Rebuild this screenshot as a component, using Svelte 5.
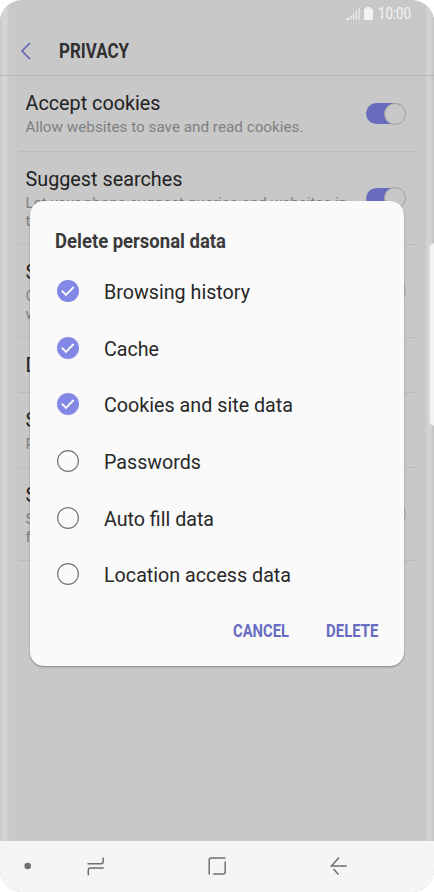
<script lang="ts">
  interface Setting {
    title: string
    lines: string[]
    height: number
    toggle?: 'on' | 'off'
  }

  const settings: Setting[] = [
    { title: 'Accept cookies', lines: ['Allow websites to save and read cookies.'], height: 76, toggle: 'on' },
    { title: 'Suggest searches', lines: ['Let your phone suggest queries and websites in', 'the'], height: 93, toggle: 'on' },
    { title: 'Save', lines: ['Offer', 'when'], height: 93, toggle: 'off' },
    { title: 'Delete', lines: [], height: 55 },
    { title: 'Secret', lines: ['Pass'], height: 75 },
    { title: 'Send', lines: ['Share', 'for'], height: 93, toggle: 'off' }
  ]

  let options = $state([
    { label: 'Browsing history', width: 146, checked: true },
    { label: 'Cache', width: 55, checked: true },
    { label: 'Cookies and site data', width: 189, checked: true },
    { label: 'Passwords', width: 97, checked: false },
    { label: 'Auto fill data', width: 110, checked: false },
    { label: 'Location access data', width: 187, checked: false }
  ])
</script>

{#snippet fitted(text: string, width: number, size: number, weight: number, baseline = 20)}
  <svg class="fitted" width={width} height="24" aria-label={text}>
    <text x="0" y={baseline} font-size={size} font-weight={weight} textLength={width} lengthAdjust="spacingAndGlyphs">{text}</text>
  </svg>
{/snippet}

<div class="phone">
  <div class="edge left"></div>
  <div class="edge right"></div>

  <div class="status">
    <svg width="14" height="13" viewBox="0 0 14 13">
      <path d="M.9 12.500 2.500 11.300v1.200zM5 12.500V9M7.700 12.500V6M10.300 12.500V3.500M13 12.500V1" />
    </svg>
    <svg class="battery" width="9" height="13" viewBox="0 0 9 13">
      <path d="M2.500 0h4v1.500H8q1 0 1 1V12q0 1-1 1H1q-1 0-1-1V2.500q0-1 1-1h1.500z" />
    </svg>
    {@render fitted('10:00', 33, 16.6, 400, 18)}
  </div>

  <header>
    <svg width="12" height="18" viewBox="0 0 12 18">
      <path d="M10 1 2 9l8 8" />
    </svg>
    {@render fitted('PRIVACY', 70, 19.8, 700, 19.4)}
  </header>

  <main>
    {#each settings as item}
      <section style="height: {item.height}px">
        <div class="copy">
          <h2>{item.title}</h2>
          {#each item.lines as line}
            <p>{line}</p>
          {/each}
        </div>
        {#if item.toggle}
          <span class="toggle {item.toggle}"></span>
        {/if}
      </section>
    {/each}
  </main>

  <nav>
    <svg width="434" height="51" viewBox="0 0 434 51">
      <circle cx="27.700" cy="25" r="3.300" />
      <path d="M87.500 22.800h13.500q2.200 0 2.200-2.200v-4.200M103.800 27h-13.300q-2.200 0-2.200 2.200v5" />
      <path d="M225.500 17h-14.300q-2 0-2 2v14.500M225.200 20.500v10.500q0 2-2 2h-10" />
      <path d="M346.800 25h-15.300l7.500-8.500M333.500 28l5 5.500" />
    </svg>
  </nav>

  <div class="handle"></div>

  <div class="dialog">
    <h1>{@render fitted('Delete personal data', 171, 20, 700)}</h1>
    <ul>
      {#each options as option}
        <li>
          <button onclick={() => (option.checked = !option.checked)}>
            <svg width="22" height="22" viewBox="0 0 22 22">
              {#if option.checked}
                <circle class="filled" cx="11" cy="11" r="11" />
                <path class="tick" d="m4.800 10.700 4.200 4.300 7.700-8" />
              {:else}
                <circle class="empty" cx="11" cy="11" r="10.400" />
              {/if}
            </svg>
            {@render fitted(option.label, option.width, 19.8, 400, 19.8)}
          </button>
        </li>
      {/each}
    </ul>
    <div class="actions">
      <button>{@render fitted('CANCEL', 56, 17.5, 700)}</button>
      <button>{@render fitted('DELETE', 52.5, 17.5, 700)}</button>
    </div>
  </div>
</div>

<style>
  :global(body) {
    margin: 0;
    background: #fff;
  }

  .phone {
    position: relative;
    display: flex;
    flex-direction: column;
    box-sizing: border-box;
    width: 434px;
    height: 892px;
    overflow: hidden;
    border-radius: 22px;
    background: #c8c8c8;
    font-family: Roboto, "Liberation Sans", sans-serif;
  }

  svg {
    display: block;
    flex: none;
  }

  .fitted {
    overflow: visible;
    fill: currentColor;
  }

  button {
    display: flex;
    align-items: center;
    padding: 0;
    border: 0;
    background: none;
    color: inherit;
    font: inherit;
    cursor: pointer;
  }

  .status,
  header {
    position: relative;
  }

  .status {
    display: flex;
    align-items: center;
    justify-content: flex-end;
    box-sizing: border-box;
    height: 26px;
    padding-right: 23px;
    color: #f3f3f3;
    fill: #f3f3f3;
  }

  .status path {
    stroke: #f3f3f3;
    stroke-width: 1.1;
  }

  .status .battery {
    margin: 0 5px 0 4px;
  }

  .status .battery path {
    stroke: none;
  }

  header {
    display: flex;
    align-items: center;
    gap: 27px;
    box-sizing: border-box;
    height: 50px;
    padding-left: 20px;
    border-bottom: 1px solid #b6b6b6;
    color: #303030;
  }

  header > svg:first-child {
    fill: none;
    stroke: #6266b5;
    stroke-width: 1.7;
  }

  main {
    flex: 1;
    padding: 0 18px 0 19px;
  }

  section {
    display: flex;
    align-items: center;
    justify-content: space-between;
    box-sizing: border-box;
    padding: 0 11px 0 6.500px;
    border-bottom: 1px solid #bbb;
  }

  .copy {
    white-space: nowrap;
  }

  h2 {
    margin: 0;
    color: #222;
    font-size: 19.8px;
    font-weight: 400;
    line-height: 25px;
  }

  p {
    margin: 0;
    color: #808080;
    font-size: 15.25px;
    line-height: 18px;
  }

  p:first-of-type {
    margin-top: 2px;
  }

  .toggle {
    display: flex;
    justify-content: flex-end;
    width: 39px;
    height: 21px;
    border-radius: 11px;
    background: #696cbc;
  }

  .toggle::after {
    content: '';
    box-sizing: border-box;
    width: 22px;
    height: 22px;
    margin: -0.5px -0.5px 0 0;
    border: 1px solid #a4a4a4;
    border-radius: 50%;
    background: #c8c8c8;
  }

  .toggle.off {
    background: #b0b0b0;
  }

  nav {
    height: 51px;
    background: #f5f5f5;
  }

  nav path {
    fill: none;
    stroke: #6e6e6e;
    stroke-width: 1.5;
  }

  nav circle {
    fill: #6e6e6e;
  }

  .edge {
    position: absolute;
    top: 0;
    bottom: 51px;
    width: 9px;
    background: linear-gradient(to right, #c9c9c9, #d6d6d6 45%, #d4d4d4 75%, #c8c8c8);
  }

  .left {
    left: 0;
  }

  .right {
    right: 0;
    background: linear-gradient(to right, #c9c9c9, #d4d4d4 35%, #d2d2d2 65%, #c2c2c2);
  }

  .handle {
    position: absolute;
    top: 243px;
    right: -4px;
    box-sizing: border-box;
    width: 9px;
    height: 183px;
    border: 1px solid #ddd;
    border-radius: 5px;
    background: #f3f3f3;
  }

  .dialog {
    position: absolute;
    top: 201px;
    left: 30px;
    box-sizing: border-box;
    width: 374px;
    height: 465px;
    padding: 27px 25.5px 0 25px;
    border-radius: 14px;
    background: #fafafa;
    box-shadow: 0 1px 2px rgba(0, 0, 0, 0.35);
    color: #282828;
  }

  h1 {
    margin: 0;
    color: #3b3b3b;
  }

  ul {
    margin: 11px 0 0;
    padding: 0;
    list-style: none;
  }

  li {
    display: flex;
    align-items: center;
    height: 56.6px;
    padding-left: 2px;
  }

  li button {
    gap: 25px;
  }

  .filled {
    fill: #8387e6;
  }

  .tick {
    fill: none;
    stroke: #fafafa;
    stroke-width: 1.9;
  }

  .empty {
    fill: none;
    stroke: #777;
    stroke-width: 1.2;
  }

  .actions {
    display: flex;
    justify-content: flex-end;
    gap: 37.5px;
    margin-top: 14px;
    color: #696dc2;
  }
</style>
